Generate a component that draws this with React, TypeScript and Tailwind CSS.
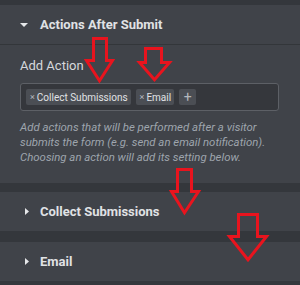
const arrows = [
  { sl: 92, sr: 108, top: 37, headY: 59, hl: 85, hr: 114, tipX: 99.5, tipY: 83 },
  { sl: 144, sr: 163, top: 47, headY: 61, hl: 138, hr: 171, tipX: 154.5, tipY: 82 },
  { sl: 176, sr: 193, top: 168, headY: 190, hl: 170, hr: 200, tipX: 184.5, tipY: 215 },
  { sl: 237, sr: 259, top: 213, headY: 235, hl: 228, hr: 268, tipX: 248, tipY: 262 },
]

function Arrow({ a }: { a: (typeof arrows)[number] }) {
  const i = 1.5
  const pts = [
    [a.sl + i, a.top + i],
    [a.sr - i, a.top + i],
    [a.sr - i, a.headY + i],
    [a.hr - i, a.headY + i],
    [a.tipX, a.tipY - i * 1.5],
    [a.hl + i, a.headY + i],
    [a.sl + i, a.headY + i],
  ]
    .map((p) => p.join(','))
    .join(' ')
  return <polygon points={pts} fill="none" stroke="#e8141e" strokeWidth={3} strokeLinejoin="miter" />
}

function Tag({ label }: { label: string }) {
  return (
    <span className="flex h-4 items-center gap-[2px] rounded-[2px] bg-[#4b4e54] pl-[4px] pr-[3px] text-[10px] text-[#e0e2e5]">
      <span className="text-[9px] leading-none text-[#b4b8bd]">×</span>
      {label}
    </span>
  )
}

function Collapsed({ title }: { title: string }) {
  return (
    <div className="flex h-[39px] items-center bg-[#404349] pl-[25px]">
      <svg width="4" height="7" viewBox="0 0 4 7" className="mr-[11px]">
        <path d="M0 0 L4 3.5 L0 7 Z" fill="#e6e8ea" />
      </svg>
      <span className="text-[13px] font-bold text-[#e0e2e5]">{title}</span>
    </div>
  )
}

export default function App() {
  return (
    <div
      className="relative h-[285px] w-[300px] overflow-hidden bg-[#34373c] pt-[5px]"
      style={{ fontFamily: 'Roboto, "Liberation Sans", sans-serif' }}
    >
      <div className="bg-[#404349]">
        <div className="flex h-[40px] items-center border-b border-[#33363a] pl-5">
          <svg width="8" height="4" viewBox="0 0 8 4" className="mr-[12px]">
            <path d="M0 0 L8 0 L4 4 Z" fill="#e6e8ea" />
          </svg>
          <span className="text-[13px] font-bold text-[#e0e2e5]">Actions After Submit</span>
        </div>
        <div className="px-5 pb-[18px] pt-[13px]">
          <div className="text-[13px] leading-4 text-[#d5d8dc]">Add Action</div>
          <div className="mt-[9px] flex h-[28px] w-[259px] items-center gap-[5px] rounded-[3px] border border-[#5d6066] bg-[#35373c] px-[5px]">
            <Tag label="Collect Submissions" />
            <Tag label="Email" />
            <span className="flex h-4 w-[17px] items-center justify-center rounded-[2px] bg-[#4b4e54] text-[14px] leading-none text-[#b4b8bd]">
              +
            </span>
          </div>
          <p className="mt-[9px] w-[266px] text-[11.4px] leading-[15px] italic text-[#9ea5ad]">
            Add actions that will be performed after a visitor submits the form (e.g. send an email notification).
            Choosing an action will add its setting below.
          </p>
        </div>
      </div>
      <div className="mt-[9px]">
        <Collapsed title="Collect Submissions" />
      </div>
      <div className="mt-[11px]">
        <Collapsed title="Email" />
      </div>
      <svg className="absolute left-0 top-0" width="300" height="285">
        {arrows.map((a, k) => (
          <Arrow key={k} a={a} />
        ))}
      </svg>
    </div>
  )
}
